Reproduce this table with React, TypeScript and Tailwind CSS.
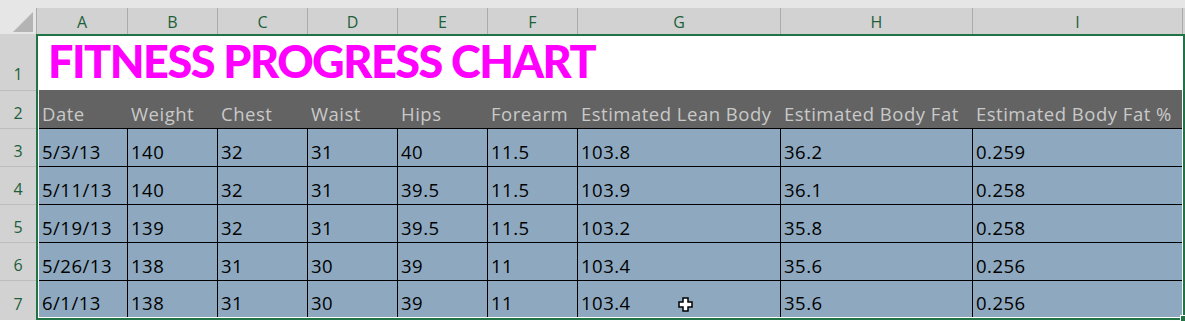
import React from "react";

const cols = [
  { key: "A", head: "w-[91px]", cell: "w-[89px]" },
  { key: "B", head: "w-[90px]", cell: "w-[90px]" },
  { key: "C", head: "w-[90px]", cell: "w-[90px]" },
  { key: "D", head: "w-[90px]", cell: "w-[90px]" },
  { key: "E", head: "w-[90px]", cell: "w-[90px]" },
  { key: "F", head: "w-[90px]", cell: "w-[90px]" },
  { key: "G", head: "w-[203px]", cell: "w-[203px]" },
  { key: "H", head: "w-[192px]", cell: "w-[192px]" },
  { key: "I", head: "w-[210px]", cell: "flex-1" },
];

const headers = [
  "Date",
  "Weight",
  "Chest",
  "Waist",
  "Hips",
  "Forearm",
  "Estimated Lean Body",
  "Estimated Body Fat",
  "Estimated Body Fat %",
];

const rows = [
  ["5/3/13", "140", "32", "31", "40", "11.5", "103.8", "36.2", "0.259"],
  ["5/11/13", "140", "32", "31", "39.5", "11.5", "103.9", "36.1", "0.258"],
  ["5/19/13", "139", "32", "31", "39.5", "11.5", "103.2", "35.8", "0.258"],
  ["5/26/13", "138", "31", "30", "39", "11", "103.4", "35.6", "0.256"],
  ["6/1/13", "138", "31", "30", "39", "11", "103.4", "35.6", "0.256"],
];

const rowHeights = ["h-[38px]", "h-[38px]", "h-[38px]", "h-[38px]", "h-[36px]"];

export default function App() {
  return (
    <div className="w-[1185px] h-[321px] overflow-hidden bg-white font-['Open_Sans',sans-serif]">
      {/* top strip */}
      <div className="h-2 bg-[#e6e6e6]" />

      {/* column letters */}
      <div className="flex h-[26px] bg-[#d2d2d2] text-[16px] text-[#1d5f3a]">
        <div className="w-[37px] h-full bg-[#e6e6e6] border-r border-[#ababab] flex items-end justify-end pr-[3px] pb-[2px]">
          <svg width="20" height="20" viewBox="0 0 20 20">
            <polygon points="20,0 20,20 0,20" fill="#b4b4b4" />
          </svg>
        </div>
        {cols.map((c) => (
          <div
            key={c.key}
            className={`${c.head} h-full border-r border-[#ababab] flex items-center justify-center leading-none pt-[2px]`}
          >
            {c.key}
          </div>
        ))}
        <div className="flex-1" />
      </div>

      <div className="flex">
        {/* row numbers */}
        <div className="w-[36px] shrink-0 bg-[#d2d2d2] text-[16px] text-[#1d5f3a] leading-none">
          <div className="h-[57px] border-b border-[#bcbcbc] flex items-end justify-center pb-[8px]">1</div>
          {[2, 3, 4, 5, 6].map((n) => (
            <div key={n} className="h-[38px] border-b border-[#bcbcbc] flex items-end justify-center pb-[7px]">
              {n}
            </div>
          ))}
          <div className="h-[38px] flex items-end justify-center pb-[7px]">7</div>
        </div>

        {/* selected range */}
        <div className="relative flex-1 border-2 border-[#217346] p-px bg-white">
          {/* title row */}
          <div className="h-[53px] flex items-end pl-[9px] pb-[6px]">
            <span className="font-['Lato',sans-serif] font-black text-[45px] leading-none text-[#ff00ff] tracking-[-1.5px]">
              FITNESS PROGRESS CHART
            </span>
          </div>

          {/* header row */}
          <div className="flex h-[39px] bg-[#636363] border-b border-black text-[18.5px] tracking-[0.5px] text-[#c9c9c9]">
            {cols.map((c, i) => (
              <div key={c.key} className={`${c.cell} flex items-end pl-[3px] pb-[5px] leading-none whitespace-nowrap`}>
                {headers[i]}
              </div>
            ))}
          </div>

          {/* data */}
          {rows.map((r, ri) => (
            <div
              key={ri}
              className={`flex ${rowHeights[ri]} bg-[#8ea9bf] text-[18.5px] tracking-[0.5px] text-black ${ri < rows.length - 1 ? "border-b border-black" : ""}`}
            >
              {cols.map((c, ci) => (
                <div
                  key={c.key}
                  className={`${c.cell} ${ci < cols.length - 1 ? "border-r border-black" : ""} flex items-end pl-[3px] pb-[5px] leading-none whitespace-nowrap`}
                >
                  {r[ci]}
                </div>
              ))}
            </div>
          ))}

          {/* mouse cursor */}
          <svg width="15" height="15" viewBox="0 0 15 15" className="absolute left-[640px] bottom-[6px]">
            <path
              d="M5 1h5v4h4v5h-4v4H5v-4H1V5h4z"
              fill="white"
              stroke="black"
              strokeWidth="1.5"
            />
          </svg>

          {/* fill handle */}
          <div className="absolute -right-[4px] -bottom-[4px] w-[7px] h-[7px] bg-[#217346] border border-white" />
        </div>
      </div>
    </div>
  );
}
